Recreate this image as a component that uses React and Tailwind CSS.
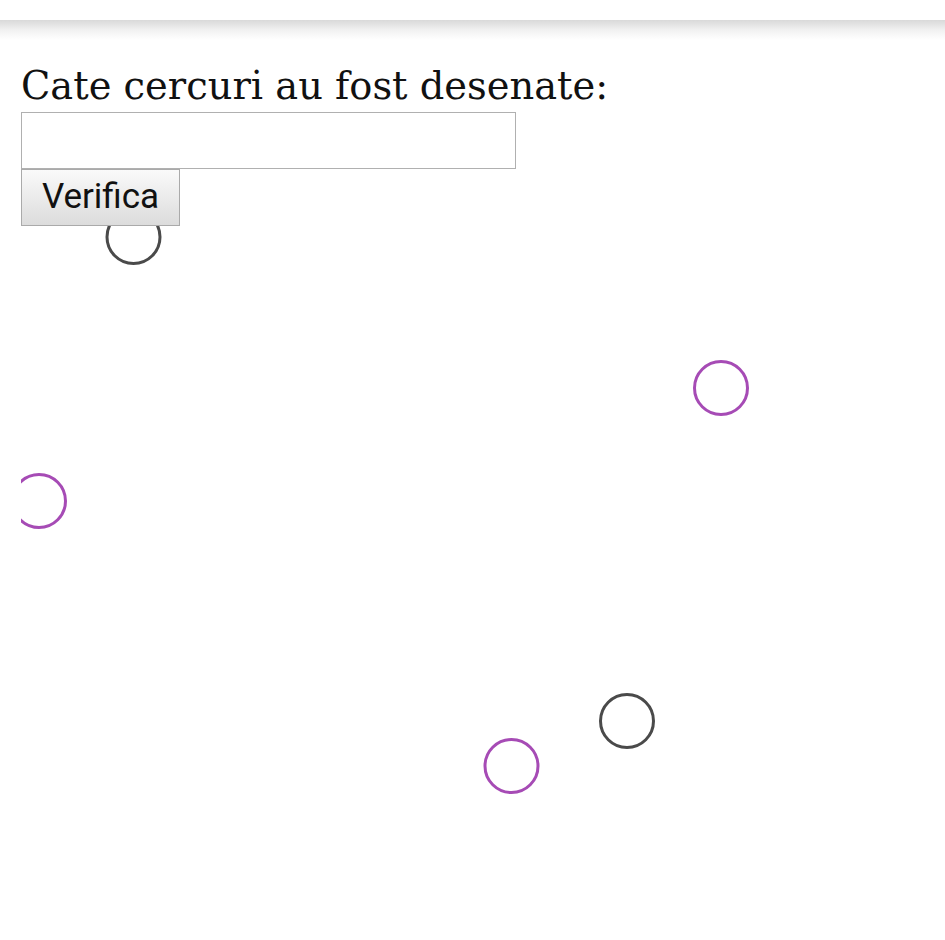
export default function App() {
  const circles = [
    { x: 112.5, y: 11, color: '#4a4a4a' },
    { x: 700, y: 162, color: '#a64bb5' },
    { x: 18, y: 275, color: '#a64bb5' },
    { x: 606, y: 495, color: '#4a4a4a' },
    { x: 490.5, y: 540, color: '#a64bb5' },
  ]

  return (
    <div className="min-h-[940px] bg-white">
      <div className="h-[20px] bg-white" />
      <div className="h-[20px] bg-gradient-to-b from-[#d9d9d9] via-[#f1f1f1] to-white" />
      <div className="pl-[21px]">
        <h1
          className="mt-[20px] text-[38.4px] leading-[52px] text-[#111]"
          style={{ fontFamily: '"DejaVu Serif", serif' }}
        >
          Cate cercuri au fost desenate:
        </h1>
        <input
          type="text"
          className="block h-[57px] w-[495px] border border-[#b0b0b0] bg-white outline-none"
        />
        <button
          type="button"
          className="block h-[57px] w-[159px] border border-[#aaa] bg-gradient-to-b from-[#fafafa] to-[#dcdcdc] text-[35px] text-[#111]"
          style={{ fontFamily: 'Roboto, sans-serif' }}
        >
          Verifica
        </button>
        <svg width="924" height="714" className="block">
          {circles.map((c, i) => (
            <circle key={i} cx={c.x} cy={c.y} r="26.5" fill="none" stroke={c.color} strokeWidth="3" />
          ))}
        </svg>
      </div>
    </div>
  )
}
